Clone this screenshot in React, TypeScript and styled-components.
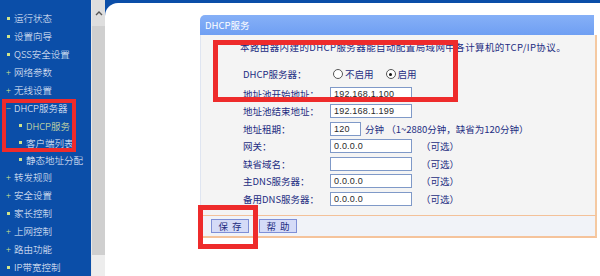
import { FunctionComponent } from 'react'
import styled, { createGlobalStyle } from 'styled-components'

const GlobalStyle = createGlobalStyle`
  html, body {
    margin: 0;
    padding: 0;
    background: #ffffff;
  }
  body {
    font-family: "Noto Sans CJK SC", "Liberation Sans", sans-serif;
    font-size: 9.5px;
  }
`

interface IMenuItem {
  label: string
  mark: 'dot' | 'plus' | 'minus'
  sub?: boolean
  active?: boolean
}

const menu: IMenuItem[] = [
  { label: '运行状态', mark: 'dot' },
  { label: '设置向导', mark: 'dot' },
  { label: 'QSS安全设置', mark: 'dot' },
  { label: '网络参数', mark: 'plus' },
  { label: '无线设置', mark: 'plus' },
  { label: 'DHCP服务器', mark: 'minus' },
  { label: 'DHCP服务', mark: 'dot', sub: true, active: true },
  { label: '客户端列表', mark: 'dot', sub: true },
  { label: '静态地址分配', mark: 'dot', sub: true },
  { label: '转发规则', mark: 'plus' },
  { label: '安全设置', mark: 'plus' },
  { label: '家长控制', mark: 'dot' },
  { label: '上网控制', mark: 'plus' },
  { label: '路由功能', mark: 'plus' },
  { label: 'IP带宽控制', mark: 'dot' },
]

interface IField {
  label: string
  value: string
  width: number
  note?: string
}

const fields: IField[] = [
  { label: '地址池开始地址：', value: '192.168.1.100', width: 82 },
  { label: '地址池结束地址：', value: '192.168.1.199', width: 82 },
  { label: '地址租期：', value: '120', width: 31, note: '分钟 （1~2880分钟，缺省为120分钟）' },
  { label: '网关：', value: '0.0.0.0', width: 82, note: '（可选）' },
  { label: '缺省域名：', value: '', width: 82, note: '（可选）' },
  { label: '主DNS服务器：', value: '0.0.0.0', width: 82, note: '（可选）' },
  { label: '备用DNS服务器：', value: '0.0.0.0', width: 82, note: '（可选）' },
]

const Page = styled.div`
  display: flex;
  width: 600px;
  height: 276px;
  overflow: hidden;
`

const Sidebar = styled.nav`
  position: relative;
  width: 91px;
  flex-shrink: 0;
  background: #0b4ea8;
  padding-top: 9px;
  box-sizing: border-box;
`

const MenuRow = styled.div<{ $sub?: boolean; $active?: boolean }>`
  display: flex;
  align-items: center;
  height: ${p => (p.$sub ? 17 : 18)}px;
  padding-left: ${p => (p.$sub ? 16 : 4)}px;
  color: ${p => (p.$active ? '#e6eea0' : '#f4f7ff')};
  font-size: 9.5px;
  font-weight: 300;
  white-space: nowrap;
`

const Mark = styled.span`
  display: inline-flex;
  align-items: center;
  justify-content: center;
  width: 9px;
  margin-right: 1px;
  color: #d9e98a;
  font-size: 9px;
  line-height: 1;
`

const Dot = styled.span`
  width: 3px;
  height: 3px;
  background: #cfe38a;
`

const Scrollbar = styled.div`
  width: 14px;
  flex-shrink: 0;
  display: flex;
  flex-direction: column;
  background: #ededed;
  border-left: 1px solid #e8e8e8;
  box-sizing: border-box;
`

const ScrollButton = styled.div`
  height: 26px;
  display: flex;
  align-items: center;
  justify-content: center;
  background: #dedede;
`

const ScrollTrack = styled.div`
  height: 229px;
  background: #cfcfcf;
`

const Main = styled.main`
  flex: 1;
  background: #0b4ea8;
  padding-top: 3px;
  display: flex;
`

const Content = styled.div`
  flex: 1;
  background: #ffffff;
  border-top-left-radius: 13px;
  padding: 12px 0 0 95px;
`

const Panel = styled.section`
  position: relative;
  width: 397px;
`

const TitleBar = styled.div`
  height: 20px;
  display: flex;
  align-items: center;
  padding-left: 5px;
  margin-right: 3px;
  background: linear-gradient(#86b0f7, #6f9ff3);
  border-top-left-radius: 5px;
  color: #ffffff;
  font-size: 9.5px;
`

const Body = styled.div`
  background: #f4f4f4;
  border-left: 1px solid #dfe5f1;
  border-right: 2px solid #f5c9a1;
  border-bottom: 1px solid #f3c199;
  padding: 5px 0 7px 39px;
  color: #1d2d82;
`

const Description = styled.p`
  margin: 0 0 9px;
  line-height: 14px;
  letter-spacing: 0.4px;
  white-space: nowrap;
`

const FormRow = styled.div<{ $tall?: boolean }>`
  display: flex;
  align-items: center;
  height: ${p => (p.$tall ? 22 : 17.5)}px;
  padding-left: 3px;
  white-space: nowrap;
`

const Label = styled.span`
  width: 87px;
  flex-shrink: 0;
`

const TextBox = styled.div`
  height: 14px;
  box-sizing: border-box;
  border: 1px solid #7f99c8;
  background: #ffffff;
  padding-left: 3px;
  display: flex;
  align-items: center;
  color: #2a2a2a;
  font-family: "Liberation Sans", sans-serif;
  font-size: 9px;
  letter-spacing: 0.2px;
`

const Note = styled.span<{ $gap: number }>`
  margin-left: ${p => p.$gap}px;
`

const RadioOption = styled.label`
  display: inline-flex;
  align-items: center;
  margin-right: 9px;
  color: #1d2d82;
`

const RadioCircle = styled.span<{ $checked?: boolean }>`
  position: relative;
  width: 10px;
  height: 10px;
  box-sizing: border-box;
  border: 1px solid #555555;
  border-radius: 50%;
  background: #ffffff;
  margin: 0 2px 0 3px;

  &::after {
    content: '';
    display: ${p => (p.$checked ? 'block' : 'none')};
    position: absolute;
    left: 2.5px;
    top: 2.5px;
    width: 3px;
    height: 3px;
    border-radius: 50%;
    background: #111111;
  }
`

const ButtonBar = styled.div`
  height: 20px;
  display: flex;
  align-items: center;
  gap: 10px;
  padding-left: 10px;
  background: #f1f3f8;
  border-left: 1px solid #dfe5f1;
  border-right: 2px solid #f5c9a1;
  border-bottom: 2px solid #f5c39b;
`

const Button = styled.button`
  width: 38px;
  height: 14px;
  padding: 0;
  border: 1px solid #7f8fd6;
  background: #d5dbf7;
  color: #1d2d82;
  font-family: "Noto Sans CJK SC", sans-serif;
  font-size: 9.5px;
  line-height: 12px;
  letter-spacing: 4px;
  text-indent: 4px;
`

const Highlight = styled.div<{ $left: number; $top: number; $w: number; $h: number; $t: number }>`
  position: absolute;
  left: ${p => p.$left}px;
  top: ${p => p.$top}px;
  width: ${p => p.$w}px;
  height: ${p => p.$h}px;
  box-sizing: border-box;
  border: ${p => p.$t}px solid #ee2b2b;
  pointer-events: none;
`

const MenuMark: FunctionComponent<{ mark: IMenuItem['mark'] }> = ({ mark }) => (
  <Mark>{mark === 'dot' ? <Dot /> : mark === 'plus' ? '+' : '−'}</Mark>
)

export default function App() {
  return (
    <>
      <GlobalStyle />
      <Page>
        <Sidebar>
          {menu.map(item => (
            <MenuRow key={item.label} $sub={item.sub} $active={item.active}>
              <MenuMark mark={item.mark} />
              {item.label}
            </MenuRow>
          ))}
          <Highlight $left={2} $top={99} $w={74} $h={53} $t={4} />
        </Sidebar>

        <Scrollbar>
          <ScrollButton>
            <svg width="8" height="6" viewBox="0 0 8 6">
              <path d="M1 5 L4 2 L7 5" fill="none" stroke="#555" strokeWidth="1.4" />
            </svg>
          </ScrollButton>
          <ScrollTrack />
        </Scrollbar>

        <Main>
          <Content>
            <Panel>
              <TitleBar>DHCP服务</TitleBar>
              <Body>
                <Description>本路由器内建的DHCP服务器能自动配置局域网中各计算机的TCP/IP协议。</Description>
                <FormRow $tall>
                  <Label>DHCP服务器：</Label>
                  <RadioOption>
                    <RadioCircle />
                    不启用
                  </RadioOption>
                  <RadioOption>
                    <RadioCircle $checked />
                    启用
                  </RadioOption>
                </FormRow>
                {fields.map(field => (
                  <FormRow key={field.label}>
                    <Label>{field.label}</Label>
                    <TextBox style={{ width: field.width }}>{field.value}</TextBox>
                    {field.note && <Note $gap={field.width < 50 ? 4 : 9}>{field.note}</Note>}
                  </FormRow>
                ))}
              </Body>
              <ButtonBar>
                <Button>保存</Button>
                <Button>帮助</Button>
              </ButtonBar>
              <Highlight $left={13} $top={25} $w={245} $h={62} $t={5} />
              <Highlight $left={-2} $top={190} $w={60} $h={44} $t={5} />
            </Panel>
          </Content>
        </Main>
      </Page>
    </>
  )
}
